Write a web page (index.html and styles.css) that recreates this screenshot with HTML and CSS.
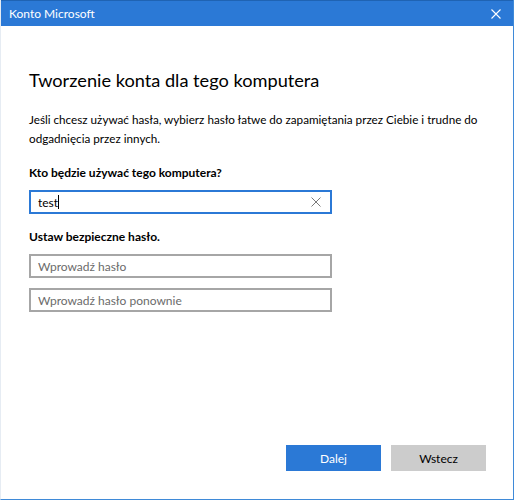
FILE: index.html
```html
<!DOCTYPE html>
<html lang="pl">
<head>
<meta charset="utf-8">
<title>Konto Microsoft</title>
<link rel="stylesheet" href="styles.css">
</head>
<body>
<div class="window">
  <div class="titlebar">
    <span class="title">Konto Microsoft</span>
    <svg class="close" width="10" height="10" viewBox="0 0 10 10"><path d="M0.5 0.5 L9.5 9.5 M9.5 0.5 L0.5 9.5" stroke="#fff" stroke-width="1.1"/></svg>
  </div>
  <div class="content">
    <h1 class="heading">Tworzenie konta dla tego komputera</h1>
    <p class="intro">Jeśli chcesz używać hasła, wybierz hasło łatwe do zapamiętania przez Ciebie i trudne do odgadnięcia przez innych.</p>
    <div class="label first">Kto będzie używać tego komputera?</div>
    <div class="field active">
      <span class="value">test</span><span class="caret"></span>
      <svg class="clear" width="10" height="10" viewBox="0 0 10 10"><path d="M0.5 0.5 L9.5 9.5 M9.5 0.5 L0.5 9.5" stroke="#7a7a7a" stroke-width="1"/></svg>
    </div>
    <div class="label second">Ustaw bezpieczne hasło.</div>
    <div class="field pw1"><span class="placeholder">Wprowadź hasło</span></div>
    <div class="field pw2"><span class="placeholder">Wprowadź hasło ponownie</span></div>
    <div class="spacer"></div>
    <div class="buttons">
      <button class="btn primary">Dalej</button>
      <button class="btn secondary">Wstecz</button>
    </div>
  </div>
</div>
</body>
</html>
```
FILE: styles.css
```css
* { box-sizing: border-box; }
html, body { margin: 0; padding: 0; background: #fff; }
body { font-family: Lato, "Noto Sans", sans-serif; color: #000; }
.window {
  width: 514px;
  height: 500px;
  border-left: 1px solid #e6ecf3;
  border-right: 1px solid #3f8ad8;
  border-bottom: 1px solid #3f8ad8;
  display: flex;
  flex-direction: column;
}
.titlebar {
  height: 26px;
  background: #2b79d6;
  border-top: 1px solid #1f63b3;
  display: flex;
  align-items: center;
  justify-content: space-between;
  padding: 0 12px 0 8px;
  flex-shrink: 0;
}
.title { color: #fff; font-size: 12px; }
.close { display: block; }
.content {
  flex: 1;
  display: flex;
  flex-direction: column;
  padding: 42px 27px 28px 28px;
}
.heading {
  margin: 0;
  font-weight: 400;
  font-size: 18.2px;
  line-height: 24px;
  color: #000;
}
.intro {
  margin: 18px 0 0 0;
  font-size: 11.7px;
  line-height: 19px;
}
.label {
  font-size: 12px;
  font-weight: 700;
  line-height: 18px;
}
.label.first { margin-top: 16px; }
.label.second { margin-top: 14px; }
.field {
  width: 303px;
  height: 24px;
  border: 2px solid #a6a6a6;
  display: flex;
  align-items: center;
  padding: 0 7px;
  font-size: 12px;
  margin-top: 8px;
}
.field.pw2 { margin-top: 10px; }
.field.active { border-color: #2b79d6; }
.value { color: #000; }
.caret { width: 1px; height: 14px; background: #000; }
.clear { margin-left: auto; margin-right: 2px; }
.placeholder { color: #6b6b6b; }
.spacer { flex: 1; }
.buttons {
  display: flex;
  justify-content: flex-end;
  gap: 10px;
}
.btn {
  width: 95px;
  height: 26px;
  border: none;
  font-family: inherit;
  font-size: 12px;
  padding: 0;
}
.primary { background: #2b79d6; color: #fff; }
.secondary { background: #cccccc; color: #000; }
```
